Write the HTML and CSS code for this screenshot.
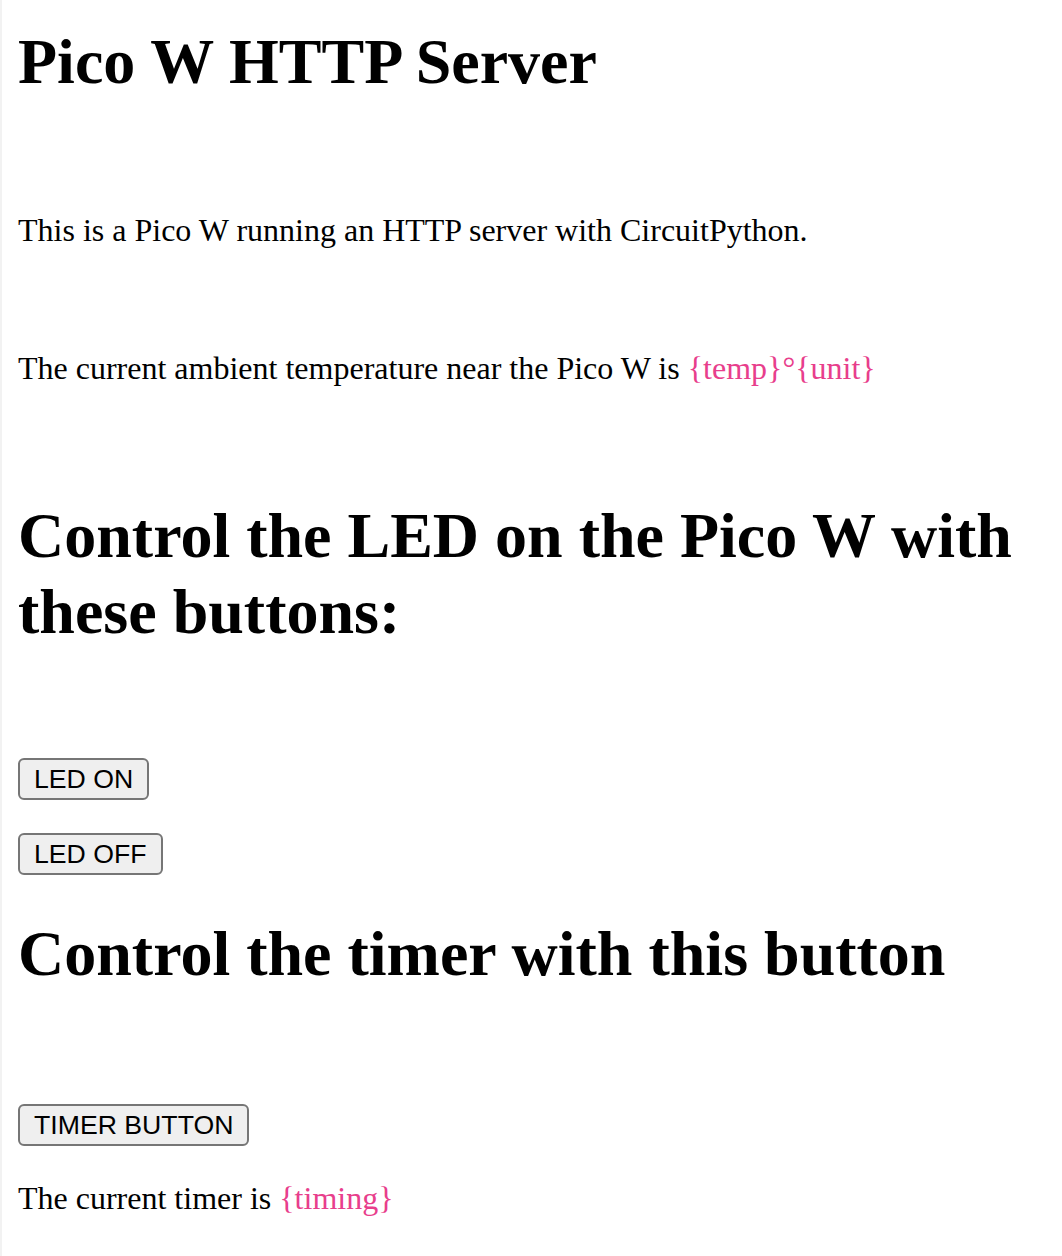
FILE: index.html
```html
<!DOCTYPE html>
<html lang="en">
<head>
<meta charset="utf-8">
<title>Pico W HTTP Server</title>
<link rel="stylesheet" href="styles.css">
</head>
<body>
<main class="page">
  <h1 class="heading title">Pico W HTTP Server</h1>
  <p class="text intro">This is a Pico W running an HTTP server with CircuitPython.</p>
  <p class="text temp">The current ambient temperature near the Pico W is <span class="var">{temp}°{unit}</span></p>
  <h1 class="heading led-head">Control the LED on the Pico W with these buttons:</h1>
  <div class="btn-wrap led-on"><button class="btn" type="button">LED ON</button></div>
  <div class="btn-wrap led-off"><button class="btn" type="button">LED OFF</button></div>
  <h1 class="heading timer-head">Control the timer with this button</h1>
  <div class="btn-wrap timer-btn"><button class="btn" type="button">TIMER BUTTON</button></div>
  <p class="text timer">The current timer is <span class="var">{timing}</span></p>
</main>
</body>
</html>
```

FILE: styles.css
```css
html, body {
  margin: 0;
  padding: 0;
  background: #ffffff;
}

body {
  border-left: 2px solid #f2f2f2;
  min-height: 1256px;
  box-sizing: border-box;
}

.page {
  display: flow-root;
  padding: 0 16px 0 16px;
  font-family: "Liberation Serif", "Times New Roman", serif;
  color: #000000;
}

.heading {
  font-size: 64px;
  font-weight: bold;
  line-height: 76px;
  margin: 0;
}

.text {
  font-size: 32px;
  line-height: 37px;
  margin: 0;
}

.var {
  color: #e83e8c;
}

.title { margin-top: 24px; }
.intro { margin-top: 112px; }
.temp { margin-top: 101px; }
.led-head { margin-top: 111px; }
.led-on { margin-top: 108px; }
.led-off { margin-top: 33px; }
.timer-head { margin-top: 41px; }
.timer-btn { margin-top: 112px; }
.timer { margin-top: 34px; }

.btn-wrap {
  display: flex;
}

.btn {
  font-family: "Liberation Sans", Arial, sans-serif;
  font-size: 26.67px;
  line-height: 30px;
  padding: 4px 14px;
  margin: 0;
  border: 2px solid #767676;
  border-radius: 6px;
  background: #efefef;
  color: #000000;
}
```
